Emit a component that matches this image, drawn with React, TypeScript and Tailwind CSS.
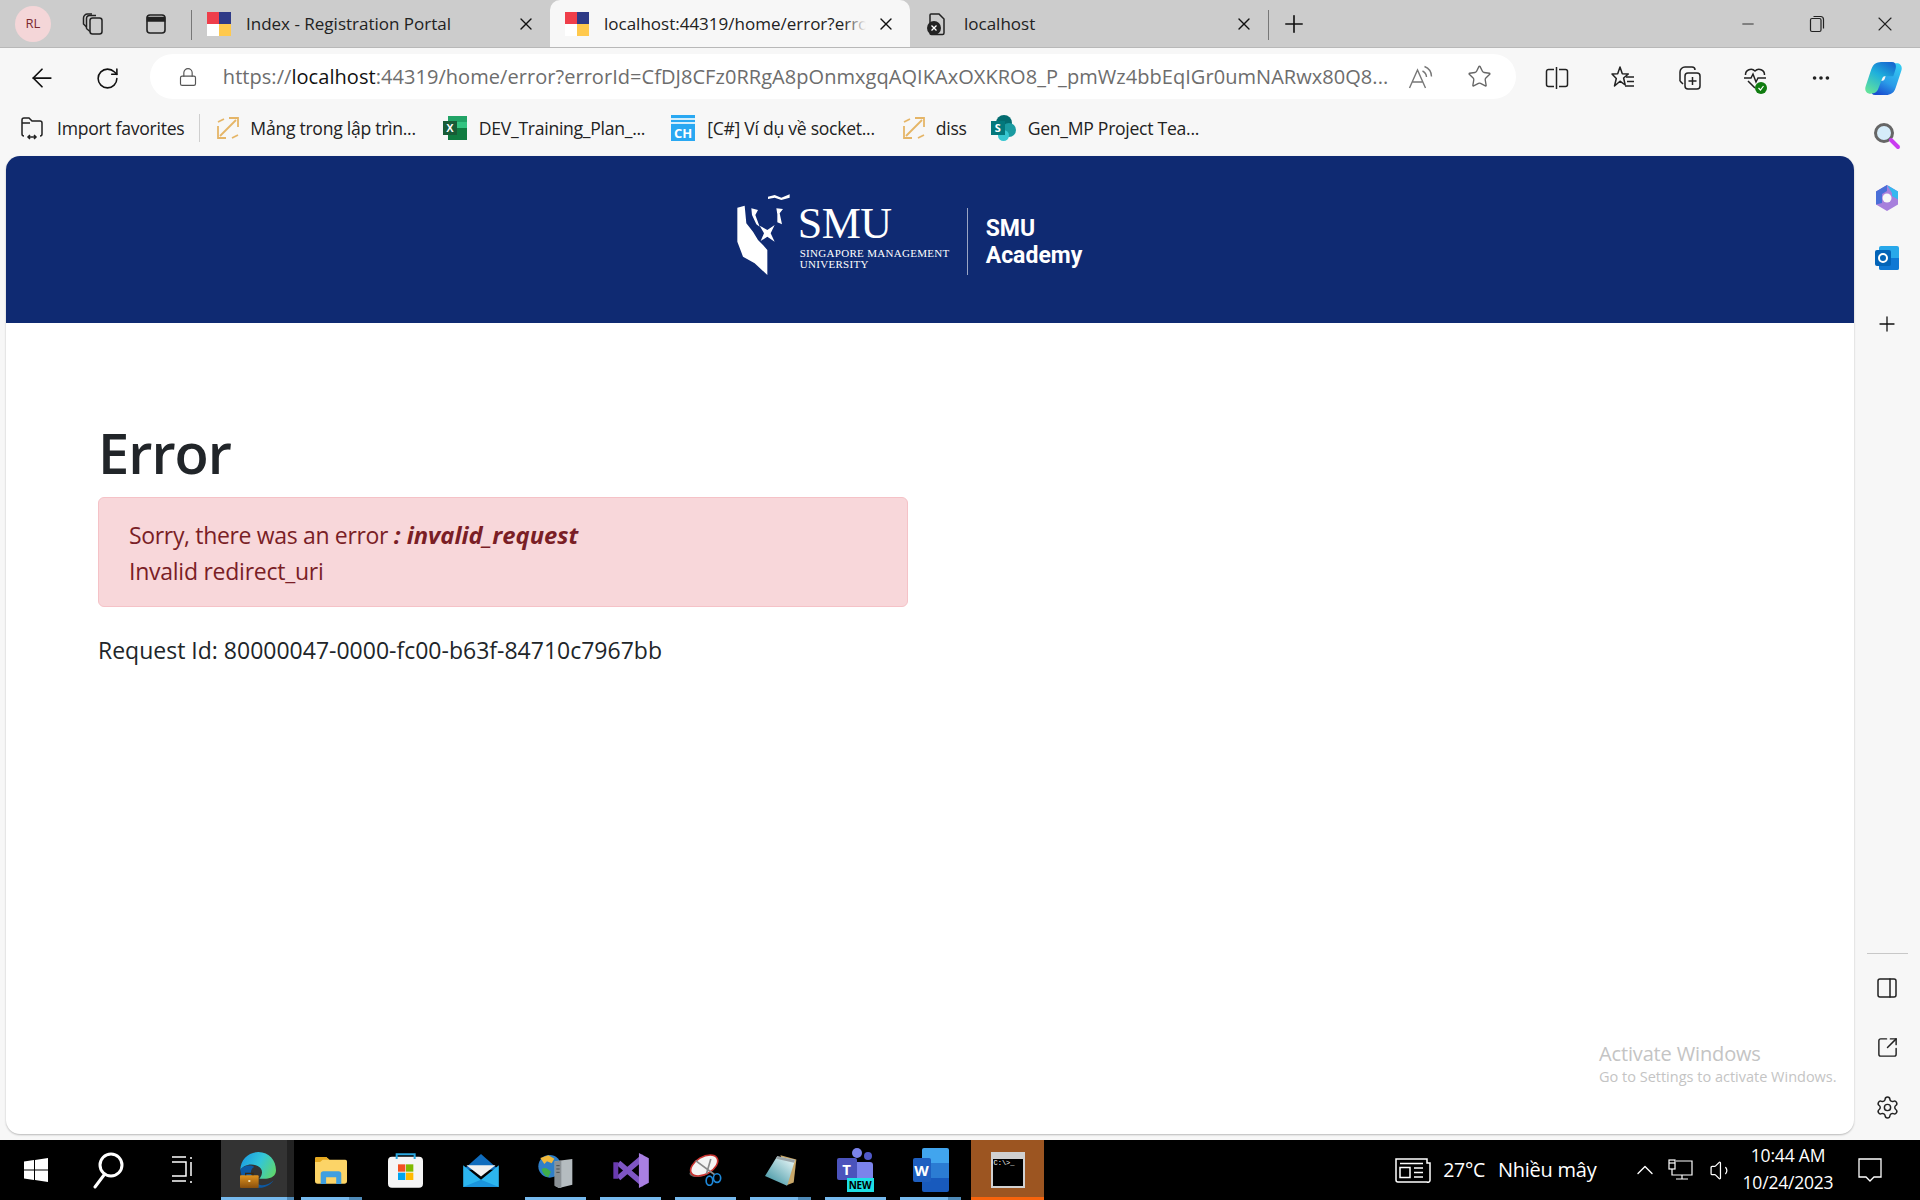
import React from 'react';
import {
  ArrowLeft, RotateCw, Lock, Star, Plus, X, Minus, Settings, SquareArrowOutUpRight, PanelRight,
  Ellipsis, ChevronUp, Volume1,
} from 'lucide-react';

const Favicon = () => (
  <svg width="24" height="24" viewBox="0 0 24 24" className="shrink-0">
    <rect x="0" y="0" width="12" height="12" fill="#ef3e4a" />
    <rect x="12" y="0" width="12" height="12" fill="#2e3a87" />
    <rect x="0" y="12" width="12" height="12" fill="#ffffff" />
    <rect x="12" y="12" width="12" height="12" fill="#ffc94d" />
  </svg>
);

const ErrorPageIcon = () => (
  <svg width="24" height="26" viewBox="0 0 24 26" fill="none" className="shrink-0">
    <path d="M6 3h8l5 5v14a1.5 1.5 0 0 1-1.5 1.5h-11A1.5 1.5 0 0 1 5 22V4a1 1 0 0 1 1-1z" stroke="#222" strokeWidth="1.5" />
    <circle cx="9" cy="17" r="7" fill="#222" />
    <path d="M6.5 14.5l5 5M11.5 14.5l-5 5" stroke="#fff" strokeWidth="1.3" />
  </svg>
);

const CollectionsTabsIcon = () => (
  <svg width="26" height="26" viewBox="0 0 26 26" fill="none" stroke="#222" strokeWidth="1.5">
    <rect x="10" y="7" width="12" height="16" rx="2.5" />
    <path d="M10 20.5l-3-2.5a2 2 0 0 1-.5-2V7.5A3 3 0 0 1 10 4.500h6" />
    <path d="M6.500 16L3.500 13V7a4 4 0 0 1 4-4H12" />
  </svg>
);

const VerticalTabsIcon = () => (
  <svg width="24" height="24" viewBox="0 0 24 24" fill="none" stroke="#222" strokeWidth="1.6">
    <rect x="3" y="3" width="18" height="18" rx="3" />
    <path d="M3.500 5.500h17V9h-17z" fill="#222" />
  </svg>
);

const Tab = ({ active, icon, label, width }: { active?: boolean; icon: React.ReactNode; label: string; width: string }) => (
  <div className={`flex h-[47px] ${width} items-center pl-[15px] pr-[14px] rounded-t-[10px] ${active ? 'bg-[#f7f7f7]' : ''}`}>
    {icon}
    <div className={`relative ml-[15px] flex-1 whitespace-nowrap text-[17px] text-[#222] ${active ? 'mr-[10px] overflow-hidden' : ''}`}>
      {label}
      {active && <div className="absolute bottom-0 right-0 top-0 w-[22px] bg-gradient-to-r from-transparent to-[#f7f7f7]" />}
    </div>
    <X size={20} strokeWidth={1.6} color="#111" className="shrink-0" />
  </div>
);

const TabStrip = () => (
  <div className="flex h-[48px] shrink-0 items-start border-b border-[#b8b8b8] bg-[#cccccc]">
    <div className="ml-[15px] mt-[6px] flex h-[36px] w-[36px] items-center justify-center rounded-full bg-[#f4d6d8] text-[13px] text-[#7a2a30]">RL</div>
    <div className="ml-[29px] mt-[11px]"><CollectionsTabsIcon /></div>
    <div className="ml-[38px] mt-[12px]"><VerticalTabsIcon /></div>
    <div className="ml-[23px] mt-[10px] h-[30px] w-px bg-[#777]" />
    <Tab icon={<Favicon />} label="Index - Registration Portal" width="w-[358px]" />
    <Tab active icon={<Favicon />} label="localhost:44319/home/error?erro" width="w-[360px]" />
    <Tab icon={<ErrorPageIcon />} label="localhost" width="w-[358px]" />
    <div className="mt-[10px] h-[30px] w-px bg-[#777]" />
    <Plus size={28} strokeWidth={1.4} color="#111" className="ml-[11px] mt-[10px]" />
    <div className="ml-auto mt-[12px] flex">
      <div className="flex h-[24px] w-[69px] items-center justify-center"><Minus size={18} strokeWidth={1.2} color="#222" /></div>
      <div className="flex h-[24px] w-[69px] items-center justify-center">
        <svg width="16" height="18" viewBox="0 0 16 18" fill="none" stroke="#222" strokeWidth="1.2"><rect x="1.500" y="3.500" width="10.500" height="13" rx="1.500" /><path d="M4.500 1.500h7a3 3 0 0 1 3 3v9" /></svg>
      </div>
      <div className="flex h-[24px] w-[69px] items-center justify-center pr-[2px]"><X size={24} strokeWidth={1.1} color="#222" /></div>
    </div>
  </div>
);

const ReadAloudIcon = () => (
  <svg width="26" height="24" viewBox="0 0 26 24" fill="none" stroke="#777" strokeWidth="1.400" className="shrink-0">
    <path d="M1.500 23L9.500 5l8 18M4.500 17h10" />
    <path d="M14.500 6a7 7 0 0 1 4 6M16.500 1.500a11 11 0 0 1 7 10" />
  </svg>
);

const SplitIcon = () => (
  <svg width="24" height="24" viewBox="0 0 24 24" fill="none" stroke="#222" strokeWidth="1.5">
    <path d="M9 3.500H3.500a2 2 0 0 0-2 2v13a2 2 0 0 0 2 2H9M14 3.500h6.500a2 2 0 0 1 2 2v13a2 2 0 0 1-2 2H14M11.500 1v22" />
  </svg>
);

const FavoritesIcon = () => (
  <svg width="26" height="26" viewBox="0 0 26 26" fill="none" stroke="#222" strokeWidth="1.5" strokeLinejoin="round">
    <path d="M10 2l2.300 6.700 6 .3-4.700 4 1.600 7L10 16.200l-5.500 4.800 1.800-7.500L2 9l5.700-.3z" />
    <path d="M16 12h8M17 16.500h7M15 21h9" />
  </svg>
);

const CollectionsIcon = () => (
  <svg width="26" height="26" viewBox="0 0 26 26" fill="none" stroke="#222" strokeWidth="1.5">
    <path d="M7 19l-2.500-2.500a2 2 0 0 1-.5-2V7a5 5 0 0 1 5-5h7a3 3 0 0 1 3 3" />
    <rect x="9" y="8" width="15" height="16" rx="3" />
    <path d="M16.500 12v8M12.500 16h8" />
  </svg>
);

const HeartIcon = () => (
  <div className="relative h-[26px] w-[26px]">
    <svg width="26" height="26" viewBox="0 0 26 26" fill="none" stroke="#222" strokeWidth="1.5">
      <path d="M13 23l-7-7M3.500 10a5.500 5.500 0 0 1 9.500-4 5.500 5.500 0 0 1 9.500 4" />
      <path d="M2 13h7l2-4 3 8 2-4h8" />
    </svg>
    <div className="absolute bottom-[-3px] right-[1px] flex h-[12px] w-[12px] items-center justify-center rounded-full bg-[#107c10]">
      <svg width="8" height="8" viewBox="0 0 8 8" fill="none" stroke="#fff" strokeWidth="1.200"><path d="M1.500 4l2 2 3-4" /></svg>
    </div>
  </div>
);

const CopilotIcon = () => (
  <svg width="37" height="33" viewBox="0 0 110 98" className="mr-[6px]">
    <defs>
      <linearGradient id="cpA" x1="0.8" y1="0" x2="0.2" y2="1"><stop offset="0" stopColor="#1668d0" /><stop offset="0.45" stopColor="#1fb0dc" /><stop offset="1" stopColor="#62e29c" /></linearGradient>
      <linearGradient id="cpB" x1="0.8" y1="0" x2="0.3" y2="1"><stop offset="0" stopColor="#35ccf2" /><stop offset="0.6" stopColor="#2a9be8" /><stop offset="1" stopColor="#1a4fd0" /></linearGradient>
    </defs>
    <path d="M76 95C70 98 64 98 58 98H30C18 98 16 86 20 74L26 56H52C56 56 58 52 60 46L70 20C74 8 82 4 94 4C106 4 112 14 108 26L92 74C88 86 84 92 76 95Z" fill="url(#cpB)" />
    <path d="M34 3C40 0 46 0 52 0H80C92 0 94 12 90 24L84 42H58C54 42 52 46 50 52L40 78C36 90 28 94 16 94C4 94-2 84 2 72L18 24C22 12 26 6 34 3Z" fill="url(#cpA)" />
  </svg>
);

const Toolbar = () => {
  const slot = 'flex h-[60px] w-[66px] items-center justify-center';
  return (
    <div className="flex h-[60px] shrink-0 items-start bg-[#f7f7f7]">
      <div className="ml-[9px] flex h-[60px] w-[66px] items-center justify-center"><ArrowLeft size={30} strokeWidth={1.4} color="#111" /></div>
      <div className="flex h-[60px] w-[66px] items-center justify-center"><RotateCw size={25} strokeWidth={1.5} color="#111" /></div>
      <div className="ml-[9px] mt-[6px] flex h-[45px] w-[1368px] items-center rounded-full bg-white pl-[28px]">
        <Lock size={20} strokeWidth={1.4} color="#555" className="shrink-0" />
        <div className="ml-[25px] w-[1165px] shrink-0 whitespace-nowrap text-[20px] tracking-[0.05px] text-[#6d6d6d]">
          https://<span className="text-[#111]">localhost</span>:44319/home/error?errorId=CfDJ8CFz0RRgA8pOnmxgqAQIKAxOXKRO8_P_pmWz4bbEqIGr0umNARwx80Q8...
        </div>
        <div className="ml-[20px]"><ReadAloudIcon /></div>
        <Star size={25} strokeWidth={1.3} color="#666" className="ml-[33px] shrink-0" />
      </div>
      <div className="ml-[8px] flex">
        <div className={slot}><SplitIcon /></div>
        <div className={slot}><FavoritesIcon /></div>
        <div className={slot}><CollectionsIcon /></div>
        <div className={slot}><HeartIcon /></div>
        <div className={slot}><Ellipsis size={22} color="#222" /></div>
        <div className={slot}><CopilotIcon /></div>
      </div>
    </div>
  );
};

const ImportIcon = () => (
  <svg width="26" height="26" viewBox="0 0 26 26" fill="none" stroke="#222" strokeWidth="1.5">
    <path d="M5 21a2 2 0 0 1-2-2V5a2 2 0 0 1 2-2h5l3 3h8a2 2 0 0 1 2 2v11a2 2 0 0 1-2 2" />
    <path d="M3 8h8M9 22h8M11 20l-2 2 2 2M15 20l2 2-2 2" />
  </svg>
);

const SwitchIcon = () => (
  <svg width="24" height="24" viewBox="0 0 24 24" fill="none" stroke="#e5b567" strokeWidth="1.800">
    <path d="M2 10v12h8M13 2h9v9M4 20L20 4M2 6l6-3M16 22l6-3" />
  </svg>
);

const ExcelIcon = () => (
  <svg width="24" height="26" viewBox="0 0 24 26">
    <rect x="5" y="1" width="19" height="24" fill="#21a366" />
    <rect x="5" y="13" width="19" height="12" fill="#107c41" />
    <rect x="14" y="7" width="10" height="6" fill="#33c481" />
    <rect x="0" y="6" width="14" height="14" fill="#185c37" />
    <text x="7" y="17" fontSize="11" fontWeight="700" textAnchor="middle" fill="#fff" fontFamily="Liberation Sans, sans-serif">X</text>
  </svg>
);

const CodeHowIcon = () => (
  <div className="flex h-[26px] w-[24px] flex-col bg-[#29a8f2]">
    <div className="mt-[3px] h-[2px] w-full bg-white/80" />
    <div className="mt-[2px] h-[2px] w-full bg-white/80" />
    <div className="mt-auto text-center text-[13px] font-bold leading-[15px] text-white">CH</div>
  </div>
);

const SharePointIcon = () => (
  <div className="relative h-[26px] w-[26px]">
    <div className="absolute left-[5px] top-[0px] h-[16px] w-[16px] rounded-full bg-[#036c70]" />
    <div className="absolute left-[11px] top-[8px] h-[14px] w-[14px] rounded-full bg-[#1a9ba1]" />
    <div className="absolute left-[7px] top-[15px] h-[11px] w-[11px] rounded-full bg-[#37c6d0]" />
    <div className="absolute left-[0px] top-[6px] h-[14px] w-[14px] bg-[#03787c] text-center text-[11px] font-bold leading-[14px] text-white">S</div>
  </div>
);

const Bookmark = ({ icon, label, iconGap, className }: { icon: React.ReactNode; label: string; iconGap: string; className: string }) => (
  <div className={`flex items-center ${className}`}>
    {icon}
    <span className={`${iconGap} whitespace-nowrap text-[17.600px] tracking-[-0.28px] text-[#222]`}>{label}</span>
  </div>
);

const BookmarksBar = () => (
  <div className="flex h-[48px] shrink-0 items-center pb-[8px]">
    <Bookmark icon={<ImportIcon />} label="Import favorites" iconGap="ml-[12px]" className="ml-[19px]" />
    <div className="ml-[15px] h-[28px] w-px bg-[#cfcfcf]" />
    <Bookmark icon={<SwitchIcon />} label="Mảng trong lập trìn..." iconGap="ml-[10px]" className="ml-[16px]" />
    <Bookmark icon={<ExcelIcon />} label="DEV_Training_Plan_..." iconGap="ml-[12px]" className="ml-[27px]" />
    <Bookmark icon={<CodeHowIcon />} label="[C#] Ví dụ về socket..." iconGap="ml-[12px]" className="ml-[26px]" />
    <Bookmark icon={<SwitchIcon />} label="diss" iconGap="ml-[10px]" className="ml-[27px]" />
    <Bookmark icon={<SharePointIcon />} label="Gen_MP Project Tea..." iconGap="ml-[11px]" className="ml-[24px]" />
  </div>
);

const SmuLogo = () => (
  <div className="flex h-[95px] items-start pr-[50px] pb-0 text-white">
    <svg width="70" height="95" viewBox="0 0 210 285" fill="white" className="shrink-0">
      <path d="M28 68L50 62L55 115L75 140L90 165L105 180L118 195V270L80 235L45 215L28 170Z" />
      <path d="M120 35L140 30L160 38L185 28V38L160 45L140 38L120 42Z" />
      <path d="M70 70L90 75L82 90L95 125L85 118L72 90Z" />
      <path d="M145 70L165 72L155 85L162 118L148 112L148 88Z" />
      <path d="M95 122L118 135L140 120L128 145L140 170L118 155L98 168L108 145Z" />
    </svg>
    <div className="mt-[18px] flex w-[149px] flex-col">
      <div className="h-[45px] font-['Liberation_Serif',serif] text-[44px] leading-[42px] tracking-[-0.5px]">SMU</div>
      <div className="ml-[2px] whitespace-nowrap font-['Liberation_Serif',serif] text-[11px] leading-[11px] tracking-[0.3px]">SINGAPORE MANAGEMENT<br />UNIVERSITY</div>
    </div>
    <div className="ml-[20px] mt-[23px] h-[67px] w-px bg-[#9aa5c4]" />
    <div className="ml-[18px] mt-[30px] font-['Roboto',sans-serif] text-[23px] font-bold leading-[27px]">SMU<br />Academy</div>
  </div>
);

const ErrorPage = () => (
  <div className="relative ml-[6px] mb-[6px] flex min-h-0 w-[1848px] flex-1 flex-col overflow-hidden rounded-[14px] bg-white shadow-[0_1px_2px_rgba(0,0,0,0.25)]">
    <div className="flex h-[167px] shrink-0 items-center justify-center bg-[#0f2a72] pb-[14px]">
      <SmuLogo />
    </div>
    <div className="pl-[92px] pt-[93px]">
      <h1 className="text-[56px] font-semibold leading-[72px] tracking-[-1px] text-[#212529]">Error</h1>
      <div className="mt-[9px] flex h-[110px] w-[810px] flex-col justify-center rounded-[6px] border border-[#f5c2c7] bg-[#f8d7da] pl-[30px] pt-[2px] text-[23px] leading-[36px] text-[#7a1e26]">
        <div className="whitespace-nowrap">
          <span className="tracking-[-0.34px]">Sorry, there was an error </span>
          <strong className="text-[23.800px] font-bold italic">: invalid_request</strong>
        </div>
        <div className="tracking-[-0.25px]">Invalid redirect_uri</div>
      </div>
      <p className="mt-[25px] text-[23px] leading-[36px] text-[#212529]">Request Id: 80000047-0000-fc00-b63f-84710c7967bb</p>
    </div>
    <div className="absolute bottom-[47px] left-[1593px] text-[#c4c4c4]">
      <div className="text-[20px] leading-[26px] tracking-[-0.15px]">Activate Windows</div>
      <div className="text-[14.500px] leading-[20px]">Go to Settings to activate Windows.</div>
    </div>
  </div>
);

const Sidebar = () => (
  <div className="flex w-[66px] shrink-0 flex-col items-center justify-between bg-[#f7f7f7] pb-[20px] pt-[14px]">
    <div className="flex flex-col items-center gap-[34px]">
      <svg width="28" height="28" viewBox="0 0 28 28" fill="none">
        <circle cx="11" cy="11" r="8.500" fill="#d5ecfa" stroke="#666" strokeWidth="3" />
        <path d="M18 18l7 7" stroke="#c93cf0" strokeWidth="4" strokeLinecap="round" />
      </svg>
      <svg width="26" height="28" viewBox="0 0 26 28" fill="none">
        <path d="M13 1l11 6.500v13L13 27 2 20.500v-13z" fill="#a77fdc" />
        <path d="M13 1l11 6.500v8l-6-3.500V9z" fill="#35b8f0" />
        <path d="M2 7.500L13 1v6l-5 3v9l-6 1.500z" fill="#4a6fd8" />
        <circle cx="13" cy="14" r="4.500" fill="#f7f7f7" />
      </svg>
      <div className="relative h-[24px] w-[24px]">
        <div className="absolute right-0 top-0 h-[24px] w-[20px] rounded-[2px] bg-[#28a8ea]" />
        <div className="absolute bottom-0 right-0 h-[12px] w-[20px] rounded-b-[2px] bg-[#0f78d4]" />
        <div className="absolute left-0 top-[4px] flex h-[16px] w-[16px] items-center justify-center rounded-[2px] bg-[#0364b8]">
          <div className="h-[10px] w-[10px] rounded-full border-2 border-white" />
        </div>
      </div>
      <Plus size={24} strokeWidth={1.3} color="#111" className="mt-[8px]" />
    </div>
    <div className="flex flex-col items-center gap-[36px]">
      <div className="mb-[-14px] h-px w-[41px] bg-[#c8c8c8]" />
      <PanelRight size={24} strokeWidth={1.5} color="#222" />
      <SquareArrowOutUpRight size={23} strokeWidth={1.5} color="#222" />
      <Settings size={25} strokeWidth={1.4} color="#222" />
    </div>
  </div>
);

const TaskSlot = ({ children, state, tail, className }: { children: React.ReactNode; state?: 'active' | 'open' | 'cmd'; tail?: boolean; className?: string }) => (
  <div className={`relative flex h-[60px] items-center justify-center ${className ?? 'w-[75px]'} ${state === 'active' ? 'bg-[#333333]' : ''} ${state === 'cmd' ? 'bg-[#9c5521]' : ''}`}>
    {state === 'active' && <div className="absolute bottom-0 right-0 top-0 w-[7px] bg-[#222222]" />}
    <div className="relative flex">{children}</div>
    {state === 'active' && <div className="absolute bottom-0 left-0 right-0 h-[3px] bg-[#76b9ed]" />}
    {state === 'open' && <div className="absolute bottom-0 left-[7px] h-[3px] w-[61px] bg-[#76b9ed]" />}
    {tail && <div className={`absolute bottom-0 h-[3px] bg-[#4f8ab8] ${state === 'active' ? 'right-0 w-[7px]' : 'left-[55px] w-[13px]'}`} />}
    {state === 'cmd' && <div className="absolute bottom-0 left-0 right-0 h-[3px] bg-[#f7630c]" />}
  </div>
);

const Taskbar = () => (
  <div className="flex h-[60px] shrink-0 items-center bg-black text-white">
    <TaskSlot className="w-[72px]">
      <svg width="24" height="24" viewBox="0 0 24 24" fill="white"><path d="M0 3.500l10-1.400V11.500H0zM11 2l13-2v11.500H11zM0 12.500h10v9.400L0 20.500zM11 12.500h13V24l-13-2z" /></svg>
    </TaskSlot>
    <TaskSlot className="w-[72px]">
      <svg width="34" height="38" viewBox="0 0 34 38" fill="none" stroke="white" strokeWidth="3"><circle cx="20" cy="14" r="11" /><path d="M13 24L4 36" strokeLinecap="round" /></svg>
    </TaskSlot>
    <TaskSlot className="w-[77px]">
      <svg width="26" height="28" viewBox="0 0 26 28" fill="none" stroke="white" strokeWidth="1.500"><path d="M2 1h14M2 6h14v14H2M2 25h14M21 1v2M21 6v14M21 25v2" /></svg>
    </TaskSlot>
    <TaskSlot state="active" tail className="w-[73px]">
      <svg width="36" height="36" viewBox="57 20 108 108">
        <defs>
          <linearGradient id="edgeA" x1="0" y1="0.3" x2="1" y2="0.7"><stop offset="0" stopColor="#1b9de2" /><stop offset="0.5" stopColor="#33c6d8" /><stop offset="1" stopColor="#5ed66f" /></linearGradient>
          <linearGradient id="caseA" x1="0" y1="0" x2="0" y2="1"><stop offset="0" stopColor="#e0941f" /><stop offset="1" stopColor="#8a4f0c" /></linearGradient>
        </defs>
        <path d="M58 75C58 40 85 20 112 20C145 20 165 45 165 75C165 92 150 100 135 100H115C125 90 128 70 110 62C90 52 65 60 58 75Z" fill="url(#edgeA)" />
        <path d="M58 75C60 65 85 55 100 65C85 70 85 100 110 115C125 125 145 118 158 105C145 125 125 128 110 128H70Z" fill="#0c59a4" />
        <rect x="57" y="90" width="56" height="38" rx="3" fill="url(#caseA)" />
        <path d="M74 90v-6h22v6" fill="none" stroke="#3a2a10" strokeWidth="4" />
        <rect x="82" y="104" width="6" height="6" fill="#f5e2b0" />
      </svg>
    </TaskSlot>
    <TaskSlot state="open" tail className="w-[74px]">
      <svg width="32" height="27" viewBox="288 35 95 80">
        <path d="M288 40q0-5 5-5h28l10 8h47q5 0 5 5v58q0 8-8 8h-79q-8 0-8-8z" fill="#fcd467" />
        <path d="M288 50V40q0-5 5-5h28l10 8h-20l-8 7z" fill="#e5a81f" />
        <path d="M305 115V85q0-8 8-8h45q8 0 8 8v30h-15V95h-30v20z" fill="#3f9fe0" />
      </svg>
    </TaskSlot>
    <TaskSlot>
      <svg width="35" height="36" viewBox="507 22 105 106">
        <rect x="507" y="35" width="105" height="93" rx="12" fill="#f5f5f5" />
        <path d="M533 42V28h54v14" fill="none" stroke="#2ba8e0" strokeWidth="6" />
        <rect x="537" y="58" width="22" height="22" fill="#f25022" /><rect x="561" y="58" width="22" height="22" fill="#7fba00" />
        <rect x="537" y="83" width="22" height="22" fill="#00a4ef" /><rect x="561" y="83" width="22" height="22" fill="#ffb900" />
      </svg>
    </TaskSlot>
    <TaskSlot>
      <svg width="36" height="33" viewBox="732 22 108 100">
        <path d="M732 70L786 22L840 70Z" fill="#0f6cbd" />
        <path d="M742 56H830L786 90Z" fill="#f0f0f0" />
        <path d="M732 56L786 100L840 56V122H732Z" fill="#2cb5ee" />
        <path d="M786 100L840 122H732Z" fill="#1a94dc" />
      </svg>
    </TaskSlot>
    <TaskSlot state="open">
      <svg width="35" height="35" viewBox="55 20 105 105">
        <circle cx="90" cy="60" r="34" fill="#2f7fc8" />
        <path d="M66 68c12-8 20 2 28 8l-8 16c-10-2-18-12-20-24z" fill="#3fae4a" />
        <path d="M62 35l24-8 18 10-8 14-14-6-8 8z" fill="#f0b93a" />
        <path d="M105 45L158 38V115L118 125L105 118Z" fill="#b5bcc0" />
        <path d="M105 45L125 43V125L118 125L105 118Z" fill="#8b9195" />
        <path d="M110 58h10M110 68h10M110 78h10" stroke="#4a4f52" strokeWidth="3" />
      </svg>
    </TaskSlot>
    <TaskSlot state="open">
      <svg width="36" height="35" viewBox="282 22 108 106" fill="none">
        <path d="M375 32L298 98M298 52L375 118" stroke="#7e55c4" strokeWidth="17" />
        <path d="M290 50V100" stroke="#6a3bb0" strokeWidth="15" />
        <path d="M360 22L390 38V112L360 128Z" fill="#a97fe2" />
      </svg>
    </TaskSlot>
    <TaskSlot state="open">
      <svg width="33" height="32" viewBox="512 25 100 97" fill="none">
        <ellipse cx="545" cy="80" rx="32" ry="14" fill="#666" transform="rotate(-10 545 80)" />
        <ellipse cx="558" cy="60" rx="45" ry="26" fill="#f4f4f4" stroke="#c8322f" strokeWidth="5" transform="rotate(-30 558 60)" />
        <path d="M532 45L590 88M578 40L565 85" stroke="#8a8a8a" strokeWidth="5" />
        <ellipse cx="574" cy="106" rx="10" ry="14" stroke="#1e88d8" strokeWidth="5" />
        <ellipse cx="597" cy="98" rx="11" ry="13" stroke="#1e88d8" strokeWidth="5" />
      </svg>
    </TaskSlot>
    <TaskSlot state="open" tail>
      <svg width="32" height="31" viewBox="735 27 97 93">
        <defs><linearGradient id="noteA" x1="0.8" y1="0" x2="0" y2="1"><stop offset="0" stopColor="#e6f6f7" /><stop offset="1" stopColor="#2f8a9a" /></linearGradient></defs>
        <path d="M782 27L830 40L822 110L800 118Z" fill="#c9a86a" />
        <path d="M772 30L826 42L802 120L735 90Z" fill="url(#noteA)" />
        <path d="M772 30L826 42L823 50L769 38Z" fill="#9aa4a8" />
      </svg>
    </TaskSlot>
    <TaskSlot state="open">
      <div className="relative h-[44px] w-[38px]">
        <div className="absolute left-[15px] top-0 h-[10px] w-[10px] rounded-full bg-[#7b83eb]" />
        <div className="absolute left-[27px] top-[4px] h-[8px] w-[8px] rounded-full bg-[#5059c9]" />
        <div className="absolute left-[14px] top-[14px] h-[20px] w-[22px] rounded-[3px] bg-[#7b83eb]" />
        <div className="absolute left-0 top-[10px] h-[22px] w-[20px] rounded-[2px] bg-[#4b53bc] text-center text-[15px] font-bold leading-[22px] text-white">T</div>
        <div className="absolute bottom-0 left-[10px] h-[14px] w-[27px] bg-[#1de0e6] text-center text-[10px] font-bold leading-[14px] tracking-[-0.3px] text-black">NEW</div>
      </div>
    </TaskSlot>
    <TaskSlot state="open" tail>
      <div className="relative h-[44px] w-[36px]">
        <div className="absolute right-0 top-0 h-[15px] w-[27px] rounded-t-[2px] bg-[#41a5ee]" />
        <div className="absolute right-0 top-[15px] h-[15px] w-[27px] bg-[#2b7cd3]" />
        <div className="absolute right-0 top-[30px] h-[14px] w-[27px] rounded-b-[2px] bg-[#185abd]" />
        <div className="absolute left-0 top-[10px] h-[24px] w-[18px] rounded-[2px] bg-[#1e5fc0] text-center text-[15px] font-bold leading-[24px] text-white">W</div>
      </div>
    </TaskSlot>
    <TaskSlot state="cmd" className="ml-[3px] w-[73px]">
      <div className="h-[36px] w-[34px] border-2 border-[#d0d0d0] bg-black">
        <div className="h-[5px] bg-[#d0d0d0]" />
        <div className="pl-[1px] font-['Liberation_Mono',monospace] text-[7px] leading-[9px] text-white">C:\&gt;_</div>
      </div>
    </TaskSlot>

    <div className="ml-auto flex items-center">
      <svg width="36" height="26" viewBox="0 0 36 26" fill="none" stroke="white" strokeWidth="1.500" className="mr-[12px]">
        <path d="M32 2H1v21a2 2 0 0 0 2 2h29a2 2 0 0 0 3-2V6h-3z" /><path d="M5 6.500h23" /><rect x="5" y="10.500" width="10" height="10" /><path d="M19 11h9M19 15.500h9M19 20h9" />
      </svg>
      <span className="text-[19.500px] tracking-[-0.3px]">27°C</span>
      <span className="ml-[13px] w-[103px] whitespace-nowrap text-[20px] tracking-[-0.25px]">Nhiều mây</span>
      <ChevronUp size={28} strokeWidth={1.2} color="white" className="ml-[30px]" />
      <svg width="26" height="22" viewBox="0 0 26 22" fill="none" stroke="white" strokeWidth="1.200" className="ml-[9px]">
        <path d="M8 2h16v14H4v-6M14 16v4M8 20h12" /><rect x="1" y="1" width="6" height="9" fill="black" /><path d="M1 4h6" />
      </svg>
      <Volume1 size={25} strokeWidth={1.2} color="white" className="ml-[15px]" />
      <div className="ml-[5px] mt-[-2px] flex w-[98px] flex-col items-center text-[17.500px] leading-[27px] tracking-[-0.2px]">
        <span>10:44 AM</span>
        <span>10/24/2023</span>
      </div>
      <svg width="24" height="26" viewBox="0 0 24 26" fill="none" stroke="white" strokeWidth="1.300" className="ml-[21px] mr-[38px]">
        <path d="M1 2h22v18h-7l-4 4-4-4H1z" />
      </svg>
    </div>
  </div>
);

export default function App() {
  return (
    <div className="flex h-[1200px] w-[1920px] flex-col overflow-hidden bg-[#f7f7f7] font-['Open_Sans','Noto_Sans',sans-serif]">
      <TabStrip />
      <Toolbar />
      <div className="flex min-h-0 flex-1">
        <div className="flex min-w-0 flex-1 flex-col">
          <BookmarksBar />
          <ErrorPage />
        </div>
        <Sidebar />
      </div>
      <Taskbar />
    </div>
  );
}
